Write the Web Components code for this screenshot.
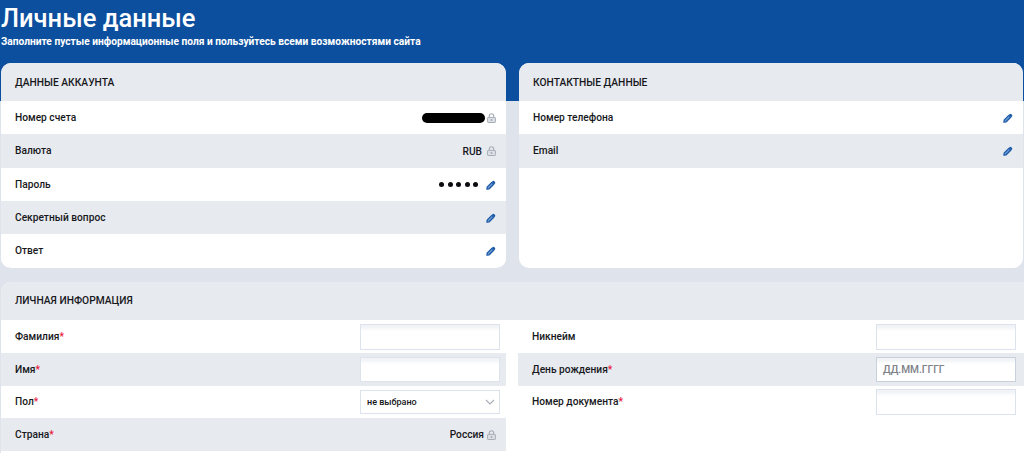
<!DOCTYPE html>
<html lang="ru">
<head>
<meta charset="utf-8">
<title>Личные данные</title>
<style>
  html, body { margin: 0; padding: 0; height: 453px; overflow: hidden; }
  body { background: #dfe4ec; font-family: Roboto, "Liberation Sans", sans-serif; }
</style>
</head>
<body>
<template id="lock-tpl"><svg width="9" height="10" viewBox="0 0 9 10" style="display:block"><path d="M2.3 4.4V2.9a2.2 2.2 0 0 1 4.4 0V4.4" fill="none" stroke="#a6adb7" stroke-width="1.1"/><rect x=".6" y="4.4" width="7.8" height="5.1" rx=".6" fill="#dde0e5" stroke="#a6adb7" stroke-width="1"/><rect x="3.7" y="6" width="1.6" height="1.9" fill="#a6adb7"/></svg></template>
<template id="pen-tpl"><svg width="10" height="10" viewBox="0 0 10 10" style="display:block"><path d="M5.8 2.4 7.7 4.3 3.2 8.8 .9 9.2 1.3 6.9Z" fill="#6f9ad0" stroke="#1c5aa8" stroke-width="1.3" stroke-linejoin="round"/><path d="M6.7 1.1a1 1 0 0 1 1.4 0L9 2a1 1 0 0 1 0 1.4L8.2 4.2 5.9 1.9Z" fill="#1c5aa8"/></svg></template>

<page-hero title-text="Личные данные" sub-text="Заполните пустые информационные поля и пользуйтесь всеми возможностями сайта"></page-hero>

<profile-page>
  <info-card slot="account" heading="ДАННЫЕ АККАУНТА">
    <info-row label="Номер счета" icon="lock"><masked-value></masked-value></info-row>
    <info-row label="Валюта" icon="lock" shaded>RUB</info-row>
    <info-row label="Пароль" icon="pen"><password-dots></password-dots></info-row>
    <info-row label="Секретный вопрос" icon="pen" shaded></info-row>
    <info-row label="Ответ" icon="pen"></info-row>
  </info-card>
  <info-card slot="contacts" heading="КОНТАКТНЫЕ ДАННЫЕ">
    <info-row label="Номер телефона" icon="pen"></info-row>
    <info-row label="Email" icon="pen" shaded></info-row>
  </info-card>
  <info-card slot="personal" heading="ЛИЧНАЯ ИНФОРМАЦИЯ" flat-bottom>
    <div style="display:grid;grid-template-columns:505px 506px;column-gap:12px">
      <div>
        <info-row label="Фамилия" required><text-box></text-box></info-row>
        <info-row label="Имя" required shaded><text-box short></text-box></info-row>
        <info-row label="Пол" required tight><select-box>не выбрано</select-box></info-row>
        <info-row label="Страна" required icon="lock" shaded><span style="margin-right:-2px">Россия</span></info-row>
      </div>
      <div style="--box-shift:2px">
        <info-row label="Никнейм"><text-box></text-box></info-row>
        <info-row label="День рождения" required shaded><text-box short placeholder="ДД.ММ.ГГГГ"></text-box></info-row>
        <info-row label="Номер документа" required tight><text-box></text-box></info-row>
      </div>
    </div>
  </info-card>
</profile-page>

<script>
class PageHero extends HTMLElement {
  connectedCallback() {
    this.attachShadow({ mode: 'open' }).innerHTML = `
      <style>
        :host { display: block; height: 101px; background: #0c4f9e; color: #fff; padding: 0 0 0 1px; box-sizing: border-box; overflow: hidden; }
        h1 { margin: 0; padding-top: 3px; font-size: 25.5px; line-height: 31px; font-weight: 500; }
        p { margin: 0; padding-top: 1px; font-size: 10.2px; line-height: 14px; font-weight: 700; }
      </style>
      <h1>${this.getAttribute('title-text')}</h1>
      <p>${this.getAttribute('sub-text')}</p>`;
  }
}

class ProfilePage extends HTMLElement {
  connectedCallback() {
    this.attachShadow({ mode: 'open' }).innerHTML = `
      <style>
        :host { display: grid; grid-template-columns: 505px 504px; column-gap: 13px; row-gap: 14px; padding: 0 0 0 1px; margin-top: -38px; position: relative; }
        .wide { grid-column: 1 / 3; width: 1023px; }
      </style>
      <slot name="account"></slot>
      <slot name="contacts"></slot>
      <div class="wide"><slot name="personal"></slot></div>`;
  }
}

class InfoCard extends HTMLElement {
  connectedCallback() {
    const flat = this.hasAttribute('flat-bottom');
    this.attachShadow({ mode: 'open' }).innerHTML = `
      <style>
        :host { display: block; background: #fff; border-radius: ${flat ? '10px 0 0 0' : '10px'}; overflow: hidden; height: ${flat ? '171px' : '205px'}; }
        header { height: 38px; box-sizing: border-box; padding: 0 0 ${flat ? 2 : 0}px 14px; background: #e7eaef; display: flex; align-items: center; font-size: 10.25px; font-weight: 500; color: #17181c; }
      </style>
      <header>${this.getAttribute('heading')}</header>
      <slot></slot>`;
  }
}

class InfoRow extends HTMLElement {
  connectedCallback() {
    const icon = this.getAttribute('icon');
    const star = this.hasAttribute('required') ? '<span class="star">*</span>' : '';
    const flat = !!this.closest('[flat-bottom]');
    // top card rows share 166px, the lower table has one row a pixel shorter
    const h = this.hasAttribute('tight') ? 32 : (flat ? 33 : 33.3);
    this.attachShadow({ mode: 'open' }).innerHTML = `
      <style>
        :host { display: flex; align-items: center; justify-content: space-between; height: ${h}px; padding: 0 10px ${flat ? 1 : 0}px 14px; box-sizing: border-box; background: ${this.hasAttribute('shaded') ? '#e7eaef' : '#fff'}; font-size: 10.2px; font-weight: 500; color: #17181c; }
        .star { color: #e8173a; }
        .right { display: flex; align-items: center; gap: 5px; padding-top: 1px; }
        .icon { display: flex; justify-content: flex-end; }
      </style>
      <span>${this.getAttribute('label')}${star}</span>
      <span class="right"><slot></slot>${icon ? '<span class="icon"></span>' : ''}</span>`;
    if (icon) {
      const tpl = document.getElementById(icon + '-tpl');
      this.shadowRoot.querySelector('.icon').appendChild(tpl.content.cloneNode(true));
    }
  }
}

class TextBox extends HTMLElement {
  connectedCallback() {
    const hint = this.getAttribute('placeholder') || '';
    const edge = hint ? '#c9d1dc' : '#dde3ec';
    this.attachShadow({ mode: 'open' }).innerHTML = `
      <style>
        :host { display: block; width: 140px; height: ${this.hasAttribute('short') ? 25 : 26}px; box-sizing: border-box; margin-right: calc(var(--box-shift, 0px) - 4px); border: 1px solid ${edge}; background: linear-gradient(#f1f3f6 0, #f1f3f6 2px, #fff 6px); font-size: 10.2px; color: #7d8086; padding-left: 6px; line-height: 23px; }
      </style>${hint}`;
  }
}

class SelectBox extends HTMLElement {
  connectedCallback() {
    this.attachShadow({ mode: 'open' }).innerHTML = `
      <style>
        :host { display: flex; align-items: center; justify-content: space-between; width: 140px; height: 24px; box-sizing: border-box; margin-right: -4px; border: 1px solid #dde3ec; background: #fff; font-size: 9px; font-weight: 500; color: #17181c; padding: 0 4px 0 6px; }
      </style>
      <slot></slot>
      <svg width="10" height="6" viewBox="0 0 10 6"><path d="M1 1l4 4 4-4" fill="none" stroke="#a9afb8" stroke-width="1.1"/></svg>`;
  }
}

class MaskedValue extends HTMLElement {
  connectedCallback() {
    this.attachShadow({ mode: 'open' }).innerHTML = `
      <style>:host { display: block; width: 63px; height: 10px; background: #000; border-radius: 5px; margin-right: -3px; }</style>`;
  }
}

class PasswordDots extends HTMLElement {
  connectedCallback() {
    this.attachShadow({ mode: 'open' }).innerHTML = `
      <style>
        :host { display: flex; gap: 3.5px; margin-right: 3px; }
        i { width: 5px; height: 5px; border-radius: 50%; background: #0c0c10; }
      </style>
      <i></i><i></i><i></i><i></i><i></i>`;
  }
}

customElements.define('page-hero', PageHero);
customElements.define('profile-page', ProfilePage);
customElements.define('info-card', InfoCard);
customElements.define('info-row', InfoRow);
customElements.define('text-box', TextBox);
customElements.define('select-box', SelectBox);
customElements.define('masked-value', MaskedValue);
customElements.define('password-dots', PasswordDots);
</script>
</body>
</html>
